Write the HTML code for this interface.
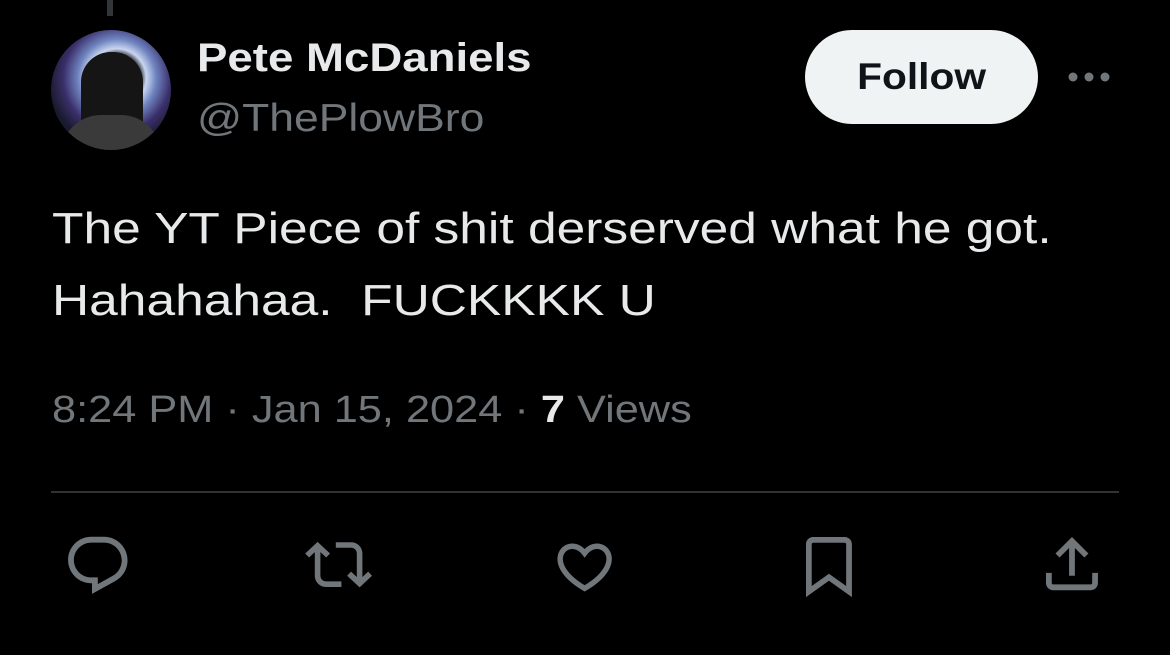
<!DOCTYPE html>
<html><head><style>
body{margin:0;width:1170px;height:655px;background:#000;overflow:hidden;font-family:"Liberation Sans",sans-serif;position:relative}
.a{position:absolute;white-space:nowrap;transform-origin:0 0}
</style></head><body>
<div class="a" style="left:107px;top:0;width:6px;height:16px;background:#333639"></div>
<div class="a" style="left:51px;top:30px;width:120px;height:120px;border-radius:50%;background:radial-gradient(circle at 55% 40%,#000 0 22%,#c9d6f0 30%,#6f84c0 40%,#3a2f6a 55%,#1a1a2e 70%);overflow:hidden">
<div style="position:absolute;left:30px;top:22px;width:62px;height:110px;border-radius:30px 30px 0 0;background:#151515"></div>
<div style="position:absolute;left:10px;top:85px;width:100px;height:50px;border-radius:40px 40px 0 0;background:#3a3a3a"></div>
</div>
<div class="a" style="left:197px;top:36px;font-size:40px;font-weight:bold;color:#e7e9ea;transform:scaleX(1.14)">Pete McDaniels</div>
<div class="a" style="left:197px;top:97px;font-size:39px;color:#71767b;transform:scaleX(1.14)">@ThePlowBro</div>
<div class="a" style="left:805px;top:30px;width:233px;height:94px;border-radius:47px;background:#eff3f4;color:#0f1419;font-size:37px;font-weight:bold;text-align:center;line-height:94px"><span style="display:inline-block;transform:scaleX(1.1)">Follow</span></div>
<svg class="a" style="left:1066px;top:70px" width="46" height="14"><circle cx="7" cy="7" r="4.5" fill="#71767b"/><circle cx="23" cy="7" r="4.5" fill="#71767b"/><circle cx="39" cy="7" r="4.5" fill="#71767b"/></svg>
<div class="a" style="left:52px;top:193px;font-size:44px;line-height:72px;color:#e7e9ea;transform:scaleX(1.17)">The YT Piece of shit derserved what he got.<br>Hahahahaa.&nbsp; FUCKKKK U</div>
<div class="a" style="left:52px;top:389px;font-size:38px;color:#71767b;transform:scaleX(1.14)">8:24 PM · Jan 15, 2024 · <b style="color:#e7e9ea">7</b> Views</div>
<div class="a" style="left:51px;top:491px;width:1068px;height:2px;background:#2f3336"></div>
<svg class="a" style="left:0;top:0" width="1170" height="655" fill="#71767b">
<path transform="translate(63 531) scale(2.9)" d="M1.751 10c0-4.42 3.584-8 8.005-8h4.366c4.49 0 8.129 3.64 8.129 8.13 0 2.96-1.607 5.68-4.196 7.11l-8.054 4.46v-3.69h-.067c-4.49.1-8.183-3.51-8.183-8.01zm8.005-6c-3.317 0-6.005 2.69-6.005 6 0 3.37 2.77 6.08 6.138 6.01l.351-.01h1.761v2.3l5.087-2.81c1.951-1.08 3.163-3.13 3.163-5.36 0-3.39-2.744-6.13-6.129-6.13H9.756z"/>
<path transform="translate(305 531) scale(2.8)" d="M4.5 3.88l4.432 4.14-1.364 1.46L5.5 7.55V16c0 1.1.896 2 2 2H13v2H7.5c-2.209 0-4-1.79-4-4V7.55L1.432 9.48.068 8.02 4.5 3.88zM16.5 6H11V4h5.5c2.209 0 4 1.79 4 4v8.45l2.068-1.93 1.364 1.46-4.432 4.14-4.432-4.14 1.364-1.46 2.068 1.930V8c0-1.1-.896-2-2-2z"/>
<path transform="translate(552 534) scale(2.72)" d="M16.697 5.5c-1.222-.06-2.679.51-3.89 2.16l-.805 1.09-.806-1.09C9.984 6.01 8.526 5.44 7.304 5.5c-1.243.07-2.349.78-2.91 1.910-.552 1.12-.633 2.78.479 4.82 1.074 1.97 3.257 4.27 7.129 6.61 3.87-2.34 6.052-4.640 7.126-6.61 1.111-2.04 1.03-3.7.477-4.82-.561-1.13-1.666-1.84-2.908-1.91zm4.187 7.69c-1.351 2.48-4.001 5.12-8.379 7.67l-.503.3-.504-.3c-4.379-2.55-7.029-5.19-8.382-7.67-1.36-2.5-1.41-4.86-.514-6.67.887-1.79 2.647-2.91 4.601-3.01 1.651-.09 3.368.56 4.798 2.01 1.429-1.45 3.146-2.1 4.796-2.01 1.954.1 3.714 1.22 4.601 3.01.896 1.81.846 4.17-.514 6.670z"/>
<path transform="translate(794.5 531.3) scale(2.87)" d="M4 4.5C4 3.12 5.119 2 6.5 2h11C18.881 2 20 3.12 20 4.5v18.44l-8-5.71-8 5.71V4.5zM6.5 4c-.276 0-.5.22-.5.5v14.56l6-4.29 6 4.29V4.5c0-.28-.224-.5-.5-.5h-11z"/>
<path transform="translate(1037.3 529.5) scale(2.89)" d="M12 2.59l5.7 5.7-1.41 1.42L13 6.41V16h-2V6.41l-3.3 3.3-1.41-1.42L12 2.59zM21 15l-.02 3.51c0 1.38-1.12 2.49-2.5 2.49H5.5C4.11 21 3 19.88 3 18.5V15h2v3.5c0 .28.22.5.5.5h12.98c.28 0 .5-.22.5-.5L19 15h2z"/>
</svg>
</body></html>
